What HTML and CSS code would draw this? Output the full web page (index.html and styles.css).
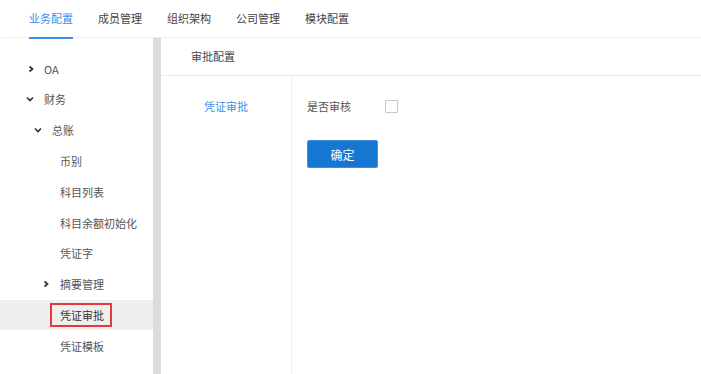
FILE: index.html
```html
<!DOCTYPE html>
<html lang="zh">
<head>
<meta charset="utf-8">
<link rel="stylesheet" href="styles.css">
</head>
<body>
<div class="nav">
  <span class="tab active">业务配置</span>
  <span class="tab">成员管理</span>
  <span class="tab">组织架构</span>
  <span class="tab">公司管理</span>
  <span class="tab">模块配置</span>
</div>
<div class="main">
  <div class="sidebar">
    <div class="row l1"><svg class="chev" viewBox="0 0 8 8"><path d="M2.5 1.5 L5.5 4 L2.5 6.5"/></svg><span>OA</span></div>
    <div class="row l1"><svg class="chev" viewBox="0 0 8 8"><path d="M1 2.5 L4 5.5 L7 2.5"/></svg><span>财务</span></div>
    <div class="row l2"><svg class="chev" viewBox="0 0 8 8"><path d="M1 2.5 L4 5.5 L7 2.5"/></svg><span>总账</span></div>
    <div class="row l3"><span>币别</span></div>
    <div class="row l3"><span>科目列表</span></div>
    <div class="row l3"><span>科目余额初始化</span></div>
    <div class="row l3"><span>凭证字</span></div>
    <div class="row l3b"><svg class="chev" viewBox="0 0 8 8"><path d="M2.5 1.5 L5.5 4 L2.5 6.5"/></svg><span>摘要管理</span></div>
    <div class="row l3 active"><span class="mark">凭证审批</span></div>
    <div class="row l3"><span>凭证模板</span></div>
  </div>
  <div class="scroll"></div>
  <div class="content">
    <div class="head">审批配置</div>
    <div class="body">
      <div class="menu"><span class="menu-item">凭证审批</span></div>
      <div class="form">
        <div class="field"><span class="label">是否审核</span><span class="check"></span></div>
        <button class="btn">确定</button>
      </div>
    </div>
  </div>
</div>
</body>
</html>
```
FILE: styles.css
```css
* { box-sizing: border-box; }
html, body { margin: 0; height: 100%; }
body {
  font-family: "Noto Sans CJK SC", "Liberation Sans", sans-serif;
  font-size: 11px;
  color: #555;
  background: #fff;
  display: flex;
  flex-direction: column;
  overflow: hidden;
}
.nav {
  height: 38px;
  border-bottom: 1px solid #eeeeee;
  display: flex;
  gap: 25px;
  padding-left: 29px;
  margin-left: 2px;
}
.nav .tab {
  height: 38px;
  line-height: 36px;
  color: #444;
  font-size: 11px;
  position: relative;
  margin-left: -2px;
  margin-right: 2px;
}
.nav .tab.active { color: #3d8ee6; }
.nav .tab.active::after {
  content: "";
  position: absolute;
  left: 0; right: 0; bottom: -1px;
  height: 2px;
  background: #3d8ee6;
}
.main { flex: 1; display: flex; min-height: 0; }
.sidebar {
  width: 153px;
  padding-top: 15.2px;
}
.row {
  height: 30.8px;
  display: flex;
  align-items: center;
  color: #555;
}
.row .chev {
  width: 8px; height: 8px;
  fill: none;
  stroke: #333;
  stroke-width: 1.7;
  margin-right: 10px;
}
.row.l1 { padding-left: 26px; }
.row.l1:first-child { padding-left: 27px; }
.row.l1:first-child .chev { margin-right: 9px; }
.row.l2 { padding-left: 34px; }
.row.l3 { padding-left: 60px; }
.row.l3b { padding-left: 42px; }
.row.active { background: #efefef; }
.row .mark {
  color: #333;
  margin-left: -10px;
  padding: 3px 6px 3px 8px;
  border: 2px solid #e8393a;
  line-height: 14px;
}
.scroll { width: 8px; background: #dcdcdc; }
.content { flex: 1; display: flex; flex-direction: column; }
.head {
  height: 38px;
  line-height: 37px;
  padding-left: 30px;
  border-bottom: 1px solid #ebebeb;
  color: #444;
}
.body { flex: 1; display: flex; }
.menu {
  width: 131px;
  border-right: 1px solid #eeeeee;
  display: flex;
  justify-content: center;
  padding-top: 20px;
}
.menu-item { color: #3d8ee6; line-height: 20px; height: 20px; }
.form { padding: 20px 15px; }
.field { display: flex; align-items: center; height: 20px; }
.label { color: #555; width: 78px; }
.check {
  width: 13px; height: 13px;
  border: 1px solid #c8c8c8;
  border-radius: 1px;
}
.btn {
  display: block;
  margin-top: 24px;
  width: 71px;
  height: 28px;
  background: #1677d2;
  color: #fff;
  border: 1px solid #3f8fe0;
  border-radius: 2px;
  font-family: inherit;
  font-size: 12px;
  padding: 0;
}
```
